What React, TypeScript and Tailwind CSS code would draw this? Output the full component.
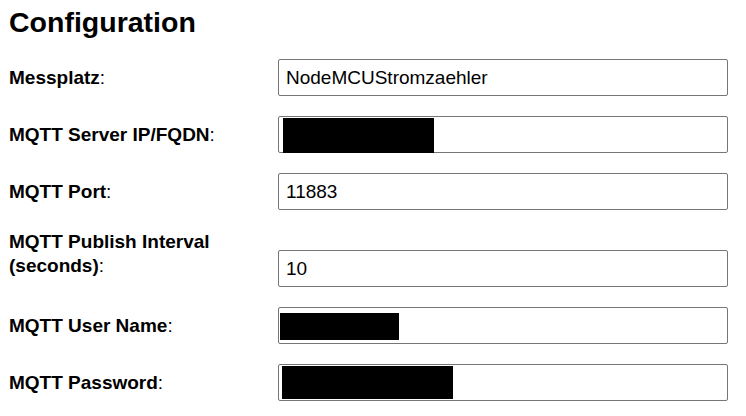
const fields = [
  { label: "Messplatz", value: "NodeMCUStromzaehler" },
  { label: "MQTT Server IP/FQDN", value: "", mask: "top-[2px] left-[5px] w-[151px] h-[35px]" },
  { label: "MQTT Port", value: "11883" },
  { label: "MQTT Publish Interval", label2: "(seconds)", value: "10" },
  { label: "MQTT User Name", value: "", mask: "top-[6px] left-[2px] w-[119px] h-[27px]" },
  { label: "MQTT Password", value: "", mask: "top-[2px] left-[4px] w-[171px] h-[33px]" },
]

type Field = (typeof fields)[number] & { label2?: string; mask?: string }

function Row({ field }: { field: Field }) {
  const twoLines = !!field.label2
  return (
    <div className={`flex ${twoLines ? "items-end" : "items-center"}`}>
      <label className={`w-[269px] shrink-0 text-[19px] ${twoLines ? "leading-[24px] pb-[9px]" : "leading-[22px]"}`}>
        {twoLines ? (
          <>
            <b>{field.label}</b>
            <br />
            <b>{field.label2}</b>:
          </>
        ) : (
          <>
            <b>{field.label}</b>:
          </>
        )}
      </label>
      <div className="relative">
        <input
          type="text"
          defaultValue={field.value}
          className="block w-[450px] h-[37px] px-[7px] border border-[#767676] rounded-[2px] bg-white text-[19px] text-black outline-none"
        />
        {field.mask && <div className={`absolute bg-black ${field.mask}`} />}
      </div>
    </div>
  )
}

export default function App() {
  return (
    <div className="min-h-[416px] bg-white text-black px-[9px] pt-[6px] font-['Liberation_Sans',Arial,sans-serif]">
      <h1 className="text-[28.5px] font-bold leading-[32px]">Configuration</h1>
      <form className="mt-[21px] flex flex-col gap-[20px]">
        {fields.map((f) => (
          <Row key={f.label} field={f as Field} />
        ))}
      </form>
    </div>
  )
}
